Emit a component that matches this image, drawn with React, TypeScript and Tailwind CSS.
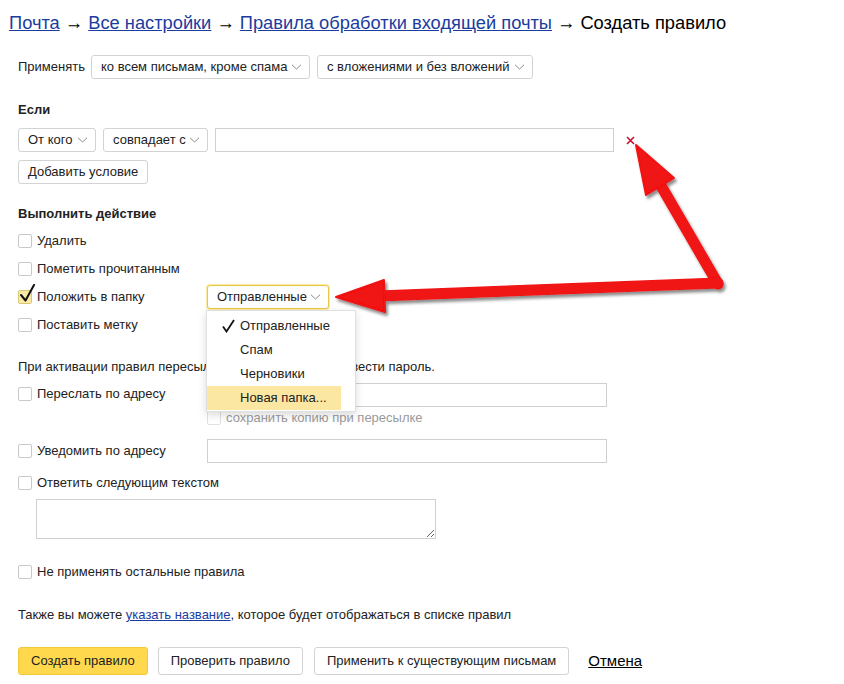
const font = { fontFamily: '"Liberation Sans", Arial, sans-serif' };

function Chevron() {
    return (
        <svg className="ml-[3px] shrink-0" width="11" height="6" viewBox="0 0 11 6">
            <path d="M1 0.8 L5.5 5 L10 0.8" fill="none" stroke="#8a8a8a" strokeWidth="1" />
        </svg>
    );
}

function Select({ label, width, active }: { label: string; width: string; active?: boolean }) {
    return (
        <div
            className={`flex items-center justify-between whitespace-nowrap h-[24px] pl-[9px] pr-[7px] rounded-[3px] bg-white border text-[13px] text-[#222] ${width} ${active ? "border-[#e6c84a] shadow-[0_0_0_1px_#fbeaa0]" : "border-[#d3d3d3]"}`}
        >
            <span>{label}</span>
            <Chevron />
        </div>
    );
}

function Checkbox({ checked, disabled }: { checked?: boolean; disabled?: boolean }) {
    return (
        <div className={`relative w-[14px] h-[14px] shrink-0 rounded-[2px] border ${checked ? "bg-[#fbe9a6] border-[#d8c77a]" : disabled ? "border-[#e2e2e2]" : "border-[#c9c9c9]"}`}>
            {checked && (
                <svg className="absolute left-[0px] top-[-7px]" width="17" height="19" viewBox="0 0 17 19">
                    <path d="M2 11 L6.5 16.5 L15 1" fill="none" stroke="#111" strokeWidth="2" strokeLinecap="round" strokeLinejoin="round" />
                </svg>
            )}
        </div>
    );
}

function CheckRow({ label, checked, children }: { label: string; checked?: boolean; children?: React.ReactNode }) {
    return (
        <div className="flex items-center h-[28px]">
            <div className="flex items-center gap-[5px] w-[189px]">
                <Checkbox checked={checked} />
                <span>{label}</span>
            </div>
            {children}
        </div>
    );
}

function TextInput({ width }: { width: string }) {
    return <div className={`h-[24px] bg-white border border-[#d0d0d0] ${width}`} />;
}

function Button({ label, primary }: { label: string; primary?: boolean }) {
    return (
        <button
            className={`h-[28px] px-[12px] rounded-[3px] border text-[13px] text-[#222] whitespace-nowrap ${primary ? "bg-[#ffd84d] border-[#f0c936]" : "bg-white border-[#d3d3d3]"}`}
        >
            {label}
        </button>
    );
}

function Arrows() {
    return (
        <svg className="absolute inset-0 pointer-events-none" width="844" height="684" viewBox="0 0 844 684">
            <defs>
                <filter id="sh" x="-20%" y="-20%" width="140%" height="140%">
                    <feDropShadow dx="2" dy="3" stdDeviation="1.5" floodColor="#000" floodOpacity="0.45" />
                </filter>
            </defs>
            <g filter="url(#sh)" fill="#f01212" stroke="#f01212">
                <line x1="718" y1="284" x2="660" y2="184" strokeWidth="11" strokeLinecap="round" />
                <line x1="718" y1="283" x2="378" y2="296" strokeWidth="11" strokeLinecap="round" />
                <polygon points="636,145 646,195 674,178" strokeWidth="2" strokeLinejoin="round" />
                <polygon points="336,297 384,280 385,312" strokeWidth="2" strokeLinejoin="round" />
            </g>
        </svg>
    );
}

export default function App() {
    return (
        <div className="relative w-[844px] h-[684px] overflow-hidden bg-white text-[13px] text-[#222] leading-[16px]" style={font}>
            {/* Breadcrumbs */}
            <div className="pt-[12px] pl-[9px] text-[18.3px] leading-[22px] text-black whitespace-nowrap">
                <a className="text-[#1b3c9e] underline" href="#">Почта</a>
                <span> → </span>
                <a className="text-[#1b3c9e] underline" href="#">Все настройки</a>
                <span> → </span>
                <a className="text-[#1b3c9e] underline" href="#">Правила обработки входящей почты</a>
                <span> → Создать правило</span>
            </div>

            <div className="pl-[18px]">
                {/* Apply */}
                <div className="flex items-center mt-[21px] h-[24px]">
                    <span className="mr-[6px]">Применять</span>
                    <Select label="ко всем письмам, кроме спама" width="w-[219px]" />
                    <div className="w-[7px]" />
                    <Select label="с вложениями и без вложений" width="w-[216px]" />
                </div>

                {/* Conditions */}
                <div className="mt-[23px] font-bold">Если</div>
                <div className="flex items-center gap-[7px] mt-[10px]">
                    <Select label="От кого" width="w-[78px]" />
                    <Select label="совпадает с" width="w-[105px]" />
                    <TextInput width="w-[399px]" />
                    <svg className="ml-[5px]" width="9" height="9" viewBox="0 0 9 9">
                        <path d="M1 1 L8 8 M8 1 L1 8" stroke="#c8102e" strokeWidth="1.6" />
                    </svg>
                </div>
                <div className="mt-[8px]">
                    <button className="h-[24px] px-[9px] rounded-[3px] border border-[#d3d3d3] bg-white text-[13px] text-[#222]">Добавить условие</button>
                </div>

                {/* Actions */}
                <div className="mt-[22px] font-bold">Выполнить действие</div>
                <div className="mt-[5px]">
                    <CheckRow label="Удалить" />
                    <CheckRow label="Пометить прочитанным" />
                    <CheckRow label="Положить в папку" checked>
                        <div className="relative">
                            <Select label="Отправленные" width="w-[122px]" active />
                            <div className="absolute z-10 left-[-1px] top-[25px] w-[150px] h-[102px] bg-white border border-[#e0e0e0] shadow-[0_3px_8px_rgba(0,0,0,0.15)] pt-[3px]">
                                <div className="relative flex items-center h-[24px] pl-[33px] text-[13px]">
                                    <svg className="absolute left-[15px] top-[5px]" width="13" height="14" viewBox="0 0 13 14">
                                        <path d="M1 7.5 L4.5 12.5 L12 1" fill="none" stroke="#111" strokeWidth="1.8" />
                                    </svg>
                                    Отправленные
                                </div>
                                <div className="flex items-center h-[24px] pl-[33px]">Спам</div>
                                <div className="flex items-center h-[24px] pl-[33px]">Черновики</div>
                                <div className="flex items-center h-[24px] pl-[33px] mr-[14px] bg-[#fbe6a2]">Новая папка...</div>
                            </div>
                        </div>
                    </CheckRow>
                    <CheckRow label="Поставить метку" />
                </div>

                {/* Forwarding */}
                <div className="mt-[20px]">При активации правил пересылки почты нужно будет ввести пароль.</div>
                <div className="flex items-center h-[24px] mt-[8px]">
                    <div className="flex items-center gap-[5px] w-[189px] self-start pt-[3px]">
                        <Checkbox />
                        <span>Переслать по адресу</span>
                    </div>
                    <TextInput width="w-[400px]" />
                </div>
                <div className="flex items-center gap-[5px] ml-[189px] mt-[3px] h-[16px] text-[#9a9a9a]">
                    <Checkbox disabled />
                    <span>сохранить копию при пересылке</span>
                </div>
                <div className="flex items-center h-[24px] mt-[13px]">
                    <div className="flex items-center gap-[5px] w-[189px]">
                        <Checkbox />
                        <span>Уведомить по адресу</span>
                    </div>
                    <TextInput width="w-[400px]" />
                </div>
                <div className="flex items-center gap-[5px] mt-[12px] h-[16px]">
                    <Checkbox />
                    <span>Ответить следующим текстом</span>
                </div>
                <textarea className="block mt-[8px] ml-[18px] w-[400px] h-[40px] border border-[#d0d0d0] bg-white" />

                <div className="flex items-center gap-[5px] mt-[25px] h-[16px]">
                    <Checkbox />
                    <span>Не применять остальные правила</span>
                </div>

                <div className="mt-[27px]">
                    Также вы можете <a className="text-[#1b3c9e] underline" href="#">указать название</a>, которое будет отображаться в списке правил
                </div>

                {/* Buttons */}
                <div className="flex items-center mt-[24px]">
                    <Button label="Создать правило" primary />
                    <div className="w-[10px]" />
                    <Button label="Проверить правило" />
                    <div className="w-[11px]" />
                    <Button label="Применить к существующим письмам" />
                    <a className="ml-[19px] text-[15px] text-black underline" href="#">Отмена</a>
                </div>
            </div>

            <Arrows />
        </div>
    );
}
